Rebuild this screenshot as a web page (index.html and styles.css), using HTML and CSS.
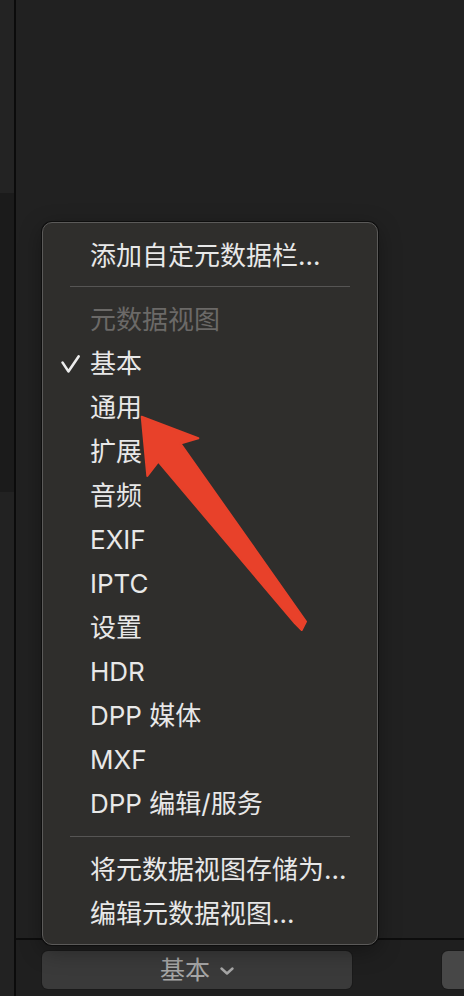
FILE: index.html
```html
<!DOCTYPE html>
<html lang="zh-CN">
<head>
<meta charset="utf-8">
<title>元数据视图菜单</title>
<link rel="stylesheet" href="styles.css">
</head>
<body>
<div class="app">
  <aside class="side">
    <div class="side-top"></div>
    <div class="side-mid"></div>
    <div class="side-bottom"></div>
  </aside>
  <div class="divider"></div>
  <main class="main">
    <div class="canvas"></div>
    <div class="bar">
      <button class="btn btn-view">基本<svg class="chev" viewBox="0 0 14 8" width="14" height="8"><path d="M1.5 1.5 L7 6.5 L12.5 1.5" fill="none" stroke="#a6a6a6" stroke-width="2.4" stroke-linecap="round" stroke-linejoin="round"/></svg></button>
      <button class="btn btn-other"></button>
    </div>
  </main>
</div>

<div class="menu">
  <div class="item">添加自定元数据栏...</div>
  <div class="sep"></div>
  <div class="item item-header">元数据视图</div>
  <div class="item item-checked"><svg class="mark" viewBox="0 0 19 18" width="19" height="18"><path d="M1.6 7.6 L7.4 16.4 L17.6 1.4" fill="none" stroke="#ececec" stroke-width="2.6" stroke-linecap="round" stroke-linejoin="round"/></svg>基本</div>
  <div class="item">通用</div>
  <div class="item">扩展</div>
  <div class="item">音频</div>
  <div class="item">EXIF</div>
  <div class="item">IPTC</div>
  <div class="item">设置</div>
  <div class="item">HDR</div>
  <div class="item">DPP 媒体</div>
  <div class="item">MXF</div>
  <div class="item">DPP 编辑/服务</div>
  <div class="sep sep-low"></div>
  <div class="item">将元数据视图存储为...</div>
  <div class="item">编辑元数据视图...</div>
</div>

<svg class="arrow" viewBox="136 410 176 226" width="176" height="226">
  <polygon points="141.7,416.7 198.3,438.3 180.5,443.5 306,621.5 301.7,630 295,623.3 158.3,461.7 147.3,476" fill="#e8412a" stroke="#e8412a" stroke-width="2" stroke-linejoin="round"/>
</svg>
</body>
</html>
```

FILE: styles.css
```css
* { box-sizing: border-box; }

html, body {
  margin: 0;
  padding: 0;
  background: #212121;
}

body {
  width: 464px;
  height: 996px;
  overflow: hidden;
  position: relative;
  font-family: "Inter", "Noto Sans CJK SC", sans-serif;
}

.app {
  display: flex;
  height: 996px;
}

.side {
  width: 14px;
  flex-shrink: 0;
  display: flex;
  flex-direction: column;
}
.side-top { height: 193px; background: #232323; }
.side-mid { height: 299px; background: #1b1b1b; }
.side-bottom { flex: 1; background: #222222; }

.divider {
  width: 2px;
  flex-shrink: 0;
  background: #0b0b0b;
}

.main {
  flex: 1;
  min-width: 0;
  display: flex;
  flex-direction: column;
}

.canvas {
  flex: 1;
  background: #212121;
}

.bar {
  height: 58px;
  border-top: 2px solid #0d0d0d;
  background: #1f1f1f;
  padding: 11px 0 0 26px;
  display: flex;
  align-items: flex-start;
  gap: 90px;
  overflow: hidden;
}

.btn {
  flex-shrink: 0;
  height: 38px;
  border: none;
  border-radius: 6px;
  padding: 0;
  font-family: "Inter", "Noto Sans CJK SC", sans-serif;
  font-size: 25px;
  line-height: 1;
  color: #a6a6a6;
  display: flex;
  align-items: center;
  justify-content: center;
  gap: 10px;
  box-shadow: 0 0 0 1px #1a1a1a;
}
.btn-view {
  width: 310px;
  background: #3a3a3a;
}
.btn-other {
  width: 40px;
  background: #474747;
}
.chev { display: block; margin-top: 2px; }

.menu {
  position: absolute;
  left: 42px;
  top: 222px;
  width: 336px;
  background: #2f2e2c;
  border: 1px solid #5b5a59;
  border-radius: 10px;
  box-shadow: 0 0 0 1px #0e0e0e, 0 6px 22px rgba(0, 0, 0, 0.35);
  padding: 11px 0 8px;
  font-size: 26px;
  color: #e8e8e8;
}

.item {
  height: 44px;
  display: flex;
  align-items: center;
  padding-left: 47px;
  line-height: 1;
  white-space: nowrap;
}

.item-header {
  color: #6b6967;
}

.item-checked {
  padding-left: 18px;
}
.mark {
  display: block;
  margin-right: 10px;
}

.sep {
  height: 1px;
  background: #565554;
  margin: 8px 27px 11px;
}
.sep-low {
  margin-top: 10px;
}

.arrow {
  position: absolute;
  left: 136px;
  top: 410px;
}
```
